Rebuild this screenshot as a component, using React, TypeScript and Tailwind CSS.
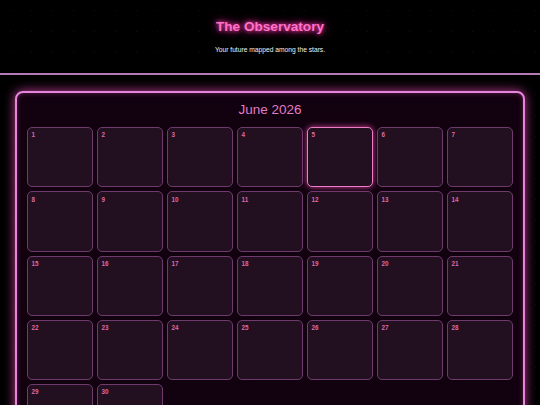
import React from "react";

const TODAY = 5;
const DAYS = Array.from({ length: 30 }, (_, i) => i + 1);

function DayCell({ day }: { day: number }) {
  const isToday = day === TODAY;
  return (
    <div
      className={`h-[60.2px] rounded-[5px] bg-[#221020] px-[3.6px] py-[3.2px] ${
        isToday
          ? "border-[1.6px] border-[#f07cc8] shadow-[0_0_6px_rgba(255,90,190,0.75)]"
          : "border border-[#6e3b6c]"
      }`}
    >
      <span className="block text-[6.3px] font-bold leading-[7.4px] text-[#d86aac]">
        {day}
      </span>
    </div>
  );
}

export default function App() {
  return (
    <div
      className="min-h-screen bg-black bg-[radial-gradient(rgba(255,255,255,0.06)_0.8px,transparent_1px)] [background-size:21px_21px] text-white"
      style={{ fontFamily: '"Liberation Sans", Arial, sans-serif' }}
    >
      {/* Header */}
      <header className="border-b-2 border-[#b67ab6] pt-[19px] pb-[19.2px] text-center">
        <h1 className="text-[13.6px] font-bold leading-[16px] text-[#ff72c8] [text-shadow:0_0_4px_#ff3fb0,0_0_10px_#ff2ea6]">
          The Observatory
        </h1>
        <p className="mt-[10.5px] text-[6.7px] leading-[8px] text-[#f2f2f2]">
          Your future mapped among the stars.
        </p>
      </header>

      {/* Calendar */}
      <main className="px-[15px] pt-[16.3px]">
        <section className="rounded-[8px] border-2 border-[#e585dc] bg-[#12010f] p-[10px] shadow-[0_0_11px_rgba(255,80,200,0.75),inset_0_0_5px_rgba(255,90,210,0.35)]">
          <h2 className="mb-[10.2px] text-center text-[13.5px] leading-[14px] text-[#e27ac4]">
            June 2026
          </h2>
          <div className="grid grid-cols-7 gap-[4px]">
            {DAYS.map((d) => (
              <DayCell key={d} day={d} />
            ))}
          </div>
        </section>
      </main>
    </div>
  );
}
